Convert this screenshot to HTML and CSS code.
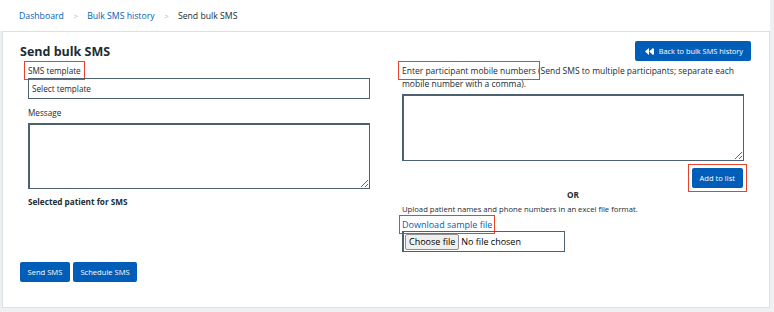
FILE: index.html
```html
<!DOCTYPE html>
<html lang="en">
<head>
    <meta charset="UTF-8">
    <meta name="viewport" content="width=device-width, initial-scale=1.0">
    <title>Send bulk SMS</title>
    <link rel="stylesheet" href="styles.css">
</head>
<body>
    <nav class="breadcrumb">
        <a href="#">Dashboard</a>
        <span class="sep">&gt;</span>
        <a href="#">Bulk SMS history</a>
        <span class="sep">&gt;</span>
        <span class="current">Send bulk SMS</span>
    </nav>

    <div class="card">
        <div class="card-header">
            <h2>Send bulk SMS</h2>
            <button class="btn btn-back">
                <svg width="9" height="7" viewBox="0 0 9 7"><path d="M0 3.5L4 0v7z M4.2 3.5L8 0v7z" fill="#fff"/><rect x="8" y="0.5" width="1" height="6" fill="#fff"/></svg>
                Back to bulk SMS history
            </button>
        </div>

        <div class="form-grid">
            <div class="col">
                <label class="field-label"><span class="mark">SMS template</span></label>
                <div class="select-box">Select template</div>
                <label class="field-label msg-label">Message</label>
                <textarea class="message"></textarea>
                <p class="selected">Selected patient for SMS</p>
            </div>

            <div class="col">
                <label class="field-label wide"><span class="mark">Enter participant mobile numbers</span> (Send SMS to multiple participants; separate each mobile number with a comma).</label>
                <textarea class="numbers"></textarea>
                <div class="add-row">
                    <span class="mark-box"><button class="btn btn-add">Add to list</button></span>
                </div>
                <p class="or">OR</p>
                <p class="upload-hint">Upload patient names and phone numbers in an excel file format.</p>
                <a href="#" class="download"><span class="mark">Download sample file</span></a>
                <div class="file-box">
                    <span class="file-btn">Choose file</span>
                    <span class="file-name">No file chosen</span>
                </div>
            </div>
        </div>

        <div class="actions">
            <button class="btn">Send SMS</button>
            <button class="btn">Schedule SMS</button>
        </div>
    </div>
</body>
</html>
```

FILE: styles.css
```css
body {
    font-family: 'Open Sans', 'Noto Sans', sans-serif;
    background-color: #eef0f2;
    color: #212b32;
    margin: 0;
    padding: 0;
    font-size: 8px;
}
a {
    color: #005eb8;
    text-decoration: none;
}
.breadcrumb {
    background-color: #fff;
    width: 770px;
    height: 31px;
    box-sizing: border-box;
    padding: 10px 0 0 19px;
    font-size: 8.7px;
    display: flex;
    align-items: flex-start;
}
.breadcrumb .sep {
    color: #aeb7bd;
    margin: 0 9px 0 10px;
    font-size: 7.5px;
    line-height: 13px;
}
.breadcrumb .current {
    color: #212b32;
}
.card {
    background-color: #fff;
    border: 1px solid #dde1e4;
    margin-left: 2px;
    width: 768px;
    height: 277px;
    box-sizing: border-box;
    padding: 9px 18px 0 17px;
}
.card-header {
    display: flex;
    justify-content: space-between;
    align-items: center;
    height: 20px;
}
.card-header h2 {
    margin: 0;
    font-size: 12.5px;
    font-weight: 700;
    color: #212b32;
}
.btn {
    background-color: #005eb8;
    color: #fff;
    border: none;
    border-radius: 2px;
    font-family: inherit;
    font-size: 7.6px;
    height: 20px;
    padding: 0 7.5px;
    white-space: nowrap;
    cursor: pointer;
}
.btn-back {
    display: flex;
    align-items: center;
    gap: 5px;
    padding: 0 8px 0 10px;
    font-size: 7.4px;
}
.form-grid {
    display: grid;
    grid-template-columns: 342px 342px;
    column-gap: 32px;
    margin: 3px 8px 0;
}
.col {
    display: flex;
    flex-direction: column;
}
.field-label {
    line-height: 13px;
    font-size: 8.2px;
}
.field-label.wide {
    font-size: 8.5px;
}
.mark {
    outline: 1.5px solid #e8412c;
    outline-offset: 3px;
}
.select-box {
    border: 1px solid #4c6272;
    height: 21px;
    box-sizing: border-box;
    padding: 0 3px;
    line-height: 19px;
    font-size: 8.2px;
    margin-top: 1px;
}
.msg-label {
    margin-top: 7px;
}
textarea {
    border: 1px solid #4c6272;
    border-left-width: 2px;
    border-top-width: 2px;
    border-radius: 0;
    resize: vertical;
    box-sizing: border-box;
    font-family: inherit;
}
.message {
    height: 66px;
    margin-top: 4px;
}
.selected {
    margin: 6px 0 0;
    font-weight: 700;
    line-height: 13px;
    font-size: 8.2px;
}
.numbers {
    height: 67px;
    margin-top: 4px;
}
.add-row {
    display: flex;
    justify-content: flex-end;
    margin-top: 7px;
    padding-right: 1px;
}
.mark-box {
    display: flex;
    outline: 1.5px solid #e8412c;
    outline-offset: 3px;
}
.btn-add {
    padding: 0 8px;
}
.or {
    text-align: center;
    font-weight: 700;
    margin: 1px 0 0;
    line-height: 12px;
    font-size: 8.2px;
}
.upload-hint {
    margin: 2px 0 0;
    font-size: 7.7px;
    line-height: 12px;
}
.download {
    font-size: 9px;
    line-height: 12px;
    margin-top: 4px;
    align-self: flex-start;
}
.download .mark {
    outline-offset: 2px;
}
.file-box {
    width: 163px;
    height: 21px;
    box-sizing: border-box;
    border: 1px solid #4c6272;
    border-left-width: 2px;
    margin-top: 0;
    display: flex;
    align-items: center;
    font-size: 9px;
}
.file-btn {
    background-color: #efefef;
    border: 1px solid #8f8f8f;
    border-radius: 2px;
    padding: 0 3px;
    line-height: 14px;
    margin: 0 2px 0 1px;
    color: #000;
}
.file-name {
    color: #000;
}
.actions {
    display: flex;
    gap: 3px;
    margin-top: 10px;
}
```
